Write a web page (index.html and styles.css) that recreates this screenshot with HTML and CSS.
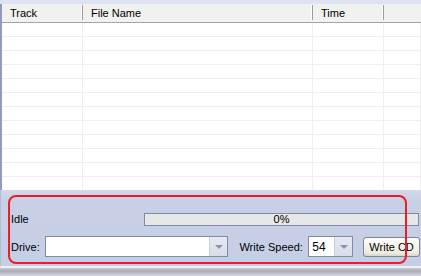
FILE: index.html
```html
<!DOCTYPE html>
<html lang="en">
<head>
  <meta charset="UTF-8">
  <title>Write CD</title>
  <link rel="stylesheet" href="styles.css">
</head>
<body>
  <div class="window">
    <div class="top-strip"></div>

    <div class="track-list">
      <div class="list-header">
        <div class="col col-track">Track</div>
        <div class="col col-name">File Name</div>
        <div class="col col-time">Time</div>
        <div class="col col-rest"></div>
      </div>
      <div class="list-body">
        <div class="row"><div class="cell col-track"></div><div class="cell col-name"></div><div class="cell col-time"></div><div class="cell col-rest"></div></div>
        <div class="row"><div class="cell col-track"></div><div class="cell col-name"></div><div class="cell col-time"></div><div class="cell col-rest"></div></div>
        <div class="row"><div class="cell col-track"></div><div class="cell col-name"></div><div class="cell col-time"></div><div class="cell col-rest"></div></div>
        <div class="row"><div class="cell col-track"></div><div class="cell col-name"></div><div class="cell col-time"></div><div class="cell col-rest"></div></div>
        <div class="row"><div class="cell col-track"></div><div class="cell col-name"></div><div class="cell col-time"></div><div class="cell col-rest"></div></div>
        <div class="row"><div class="cell col-track"></div><div class="cell col-name"></div><div class="cell col-time"></div><div class="cell col-rest"></div></div>
        <div class="row"><div class="cell col-track"></div><div class="cell col-name"></div><div class="cell col-time"></div><div class="cell col-rest"></div></div>
        <div class="row"><div class="cell col-track"></div><div class="cell col-name"></div><div class="cell col-time"></div><div class="cell col-rest"></div></div>
        <div class="row"><div class="cell col-track"></div><div class="cell col-name"></div><div class="cell col-time"></div><div class="cell col-rest"></div></div>
        <div class="row"><div class="cell col-track"></div><div class="cell col-name"></div><div class="cell col-time"></div><div class="cell col-rest"></div></div>
        <div class="row"><div class="cell col-track"></div><div class="cell col-name"></div><div class="cell col-time"></div><div class="cell col-rest"></div></div>
        <div class="row last"><div class="cell col-track"></div><div class="cell col-name"></div><div class="cell col-time"></div><div class="cell col-rest"></div></div>
      </div>
    </div>

    <div class="panel">
      <div class="status-row">
        <span class="label">Idle</span>
        <div class="progress"><span>0%</span></div>
      </div>
      <div class="drive-row">
        <span class="label">Drive:</span>
        <div class="combo combo-drive">
          <div class="combo-text"></div>
          <div class="combo-btn"><span class="arrow"></span></div>
        </div>
        <span class="label speed-label">Write Speed:</span>
        <div class="combo combo-speed">
          <div class="combo-text">54</div>
          <div class="combo-btn"><span class="arrow"></span></div>
        </div>
        <button class="write-btn">Write CD</button>
      </div>
      <div class="highlight"></div>
    </div>

    <div class="bottom-edge"></div>
  </div>
</body>
</html>
```

FILE: styles.css
```css
body {
  margin: 0;
  padding: 0;
  width: 421px;
  height: 276px;
  overflow: hidden;
  font-family: 'Liberation Sans', Arial, sans-serif;
  font-size: 11px;
  color: #000;
  background: #c9d1e6;
}

.window {
  display: flex;
  flex-direction: column;
  height: 276px;
}

.top-strip {
  height: 4px;
  background: #dde3f1;
}

/* list view */
.track-list {
  height: 186px;
  background: #fff;
  border-left: 2px solid #8f9bc2;
  overflow: hidden;
}

.list-header {
  display: flex;
  height: 18px;
  background: #f1f1ef;
  border-bottom: 1px solid #a5a5a0;
  box-sizing: border-box;
  height: 19px;
}

.list-header .col {
  line-height: 18px;
  padding-left: 8px;
  box-sizing: border-box;
  border-right: 1px solid #9c9c98;
  box-shadow: inset -1px 0 0 #fff;
  margin: 1px 0 2px;
  line-height: 16px;
}

.col-track { width: 81px; flex: none; }
.col-name { width: 230px; flex: none; }
.col-time { width: 71px; flex: none; }
.col-rest { flex: 1; }
.list-header .col-rest { border-right: none; box-shadow: none; }

.row {
  display: flex;
  height: 14px;
  border-bottom: 1px solid #eeeeee;
  box-sizing: border-box;
}

.cell {
  border-right: 1px solid #eeeeee;
  box-sizing: border-box;
}

.row .col-track { width: 81px; }
.row .col-name { width: 230px; }
.row .col-time { width: 71px; }

/* bottom panel */
.panel {
  position: relative;
  height: 76px;
  background: linear-gradient(to bottom, #d3d9ea 0px, #c8d0e6 10px, #c6cee5 100%);
  border-left: 1px solid #b5bdd4;
  box-sizing: border-box;
  padding: 22px 1px 0 10px;
}

.status-row {
  display: flex;
  align-items: center;
  height: 14px;
}

.status-row .label {
  width: 133px;
}

.progress {
  flex: 1;
  height: 13px;
  margin-right: 1px;
  border: 1px solid #7f8aa8;
  background: #e7e7e7;
  box-sizing: border-box;
  display: flex;
  justify-content: center;
  align-items: center;
  font-size: 11px;
  line-height: 11px;
}

.drive-row {
  display: flex;
  align-items: center;
  margin-top: 10px;
  height: 21px;
}

.drive-row .label {
  width: 34px;
}

.combo {
  display: flex;
  height: 21px;
  border: 1px solid #7f8ca9;
  background: #fff;
  box-sizing: border-box;
}

.combo-text {
  flex: 1;
  padding: 3px 0 0 3px;
  font-size: 12px;
}

.combo-btn {
  width: 17px;
  background: linear-gradient(to bottom, #e6e9f0, #d9dde8);
  border-left: 1px solid #c9cfdd;
  display: flex;
  justify-content: center;
  align-items: center;
}

.arrow {
  width: 0;
  height: 0;
  border-left: 4px solid transparent;
  border-right: 4px solid transparent;
  border-top: 4px solid #8793b5;
}

.combo-drive {
  width: 184px;
}

.speed-label {
  margin-left: 11px;
  width: 69px !important;
}

.combo-speed {
  width: 45px;
}

.write-btn {
  margin-left: 10px;
  width: 57px;
  height: 20px;
  padding: 0;
  font-family: inherit;
  font-size: 11px;
  color: #000;
  border: 1px solid #7d8597;
  border-radius: 3px;
  background: linear-gradient(to bottom, #fdfdfb, #ece9df 85%, #d8d4c8);
}

/* red annotation frame */
.highlight {
  position: absolute;
  left: 7px;
  top: 5px;
  width: 399px;
  height: 69px;
  border: 2px solid #ee1c24;
  border-radius: 8px;
  box-sizing: border-box;
  pointer-events: none;
}

.bottom-edge {
  flex: 1;
  background: linear-gradient(to bottom, #eef0f6 0, #eef0f6 2px, #c9cbd2 2px, #a9acb5 5px, #d3d6de 100%);
}
```
